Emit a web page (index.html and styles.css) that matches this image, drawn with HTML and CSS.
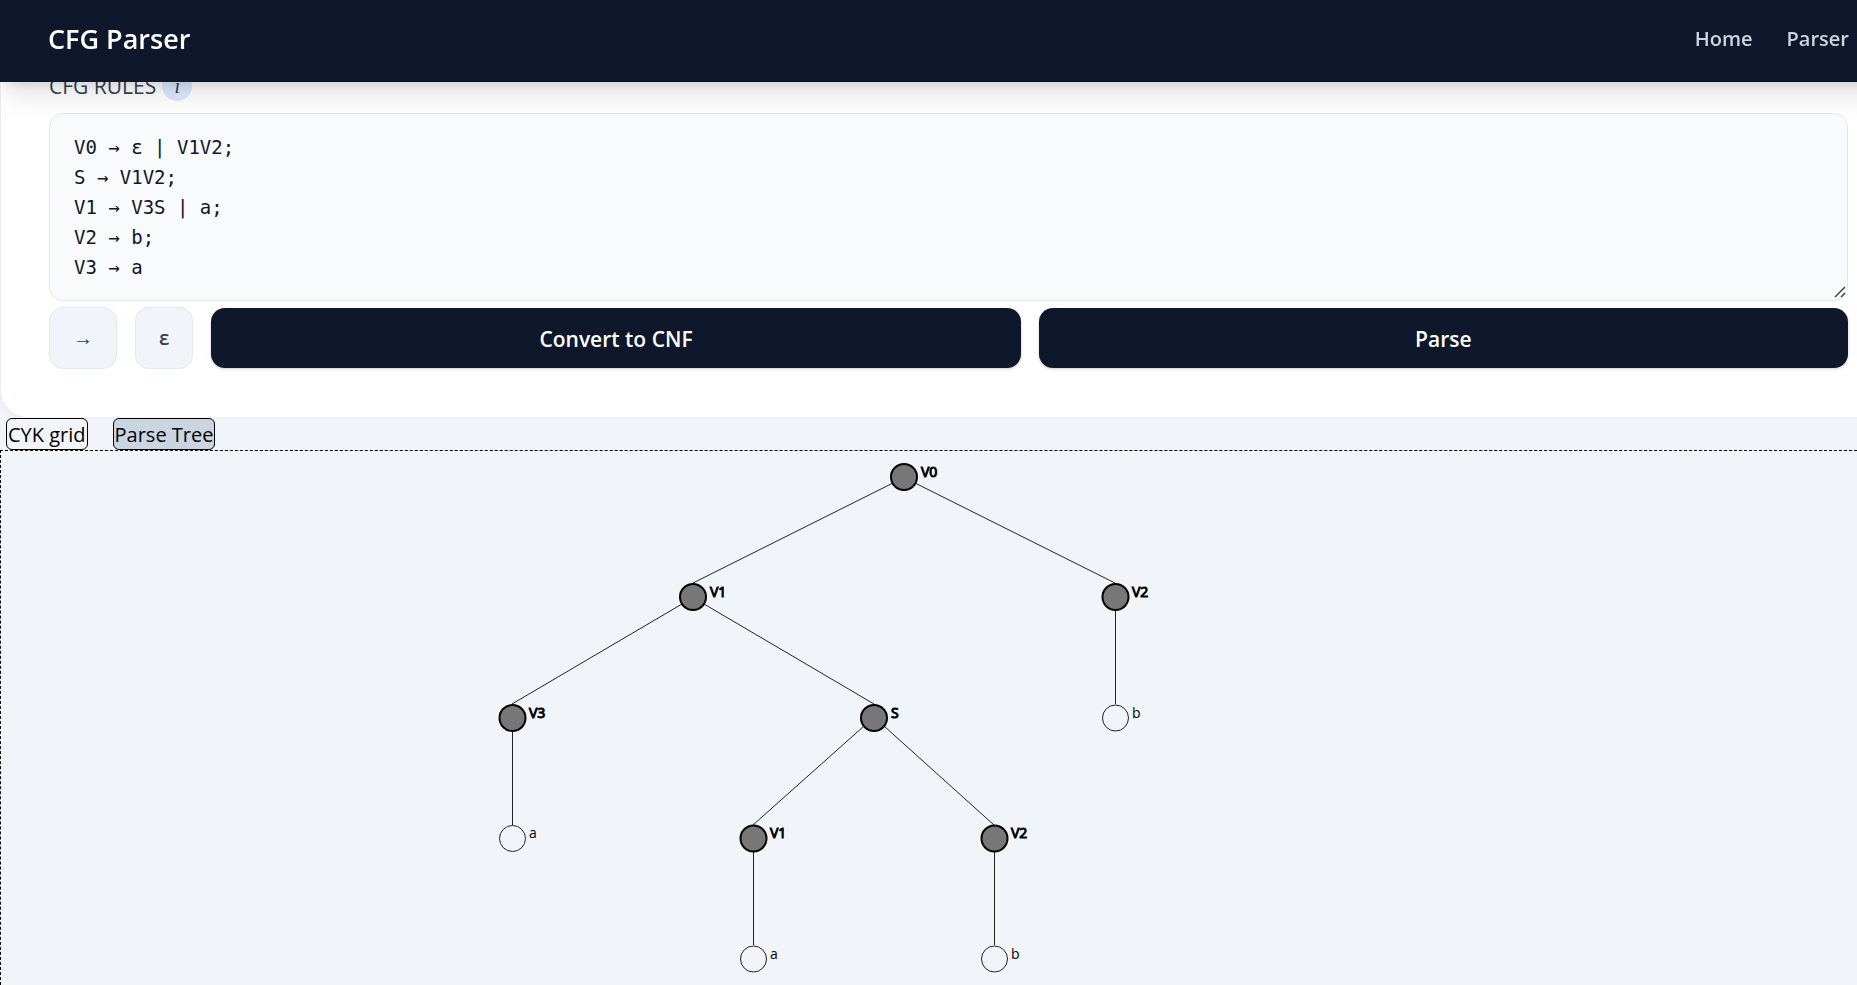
FILE: index.html
```html
<!DOCTYPE html>
<html lang="en">
<head>
<meta charset="utf-8">
<title>CFG Parser</title>
<link rel="stylesheet" href="styles.css">
</head>
<body>
<div class="page">
  <header class="topbar">
    <div class="brand">CFG Parser</div>
    <nav class="nav">
      <a href="#home">Home</a>
      <a href="#parser">Parser</a>
    </nav>
  </header>

  <main class="content">
    <form class="card">
      <div class="label-row">
        <label for="rules">CFG RULES</label>
        <span class="info">i</span>
      </div>
      <div class="rules-box">
        <textarea class="rules" id="rules" rows="5" spellcheck="false">V0 → ε | V1V2;
S → V1V2;
V1 → V3S | a;
V2 → b;
V3 → a</textarea>
        <svg class="grip" width="12" height="12" aria-hidden="true"><path d="M1 11L11 1M7 11L11 7"/></svg>
      </div>
      <div class="actions">
        <button class="symbol" type="button">→</button>
        <button class="symbol" type="button">ε</button>
        <button class="primary" type="button">Convert to CNF</button>
        <button class="primary" type="button">Parse</button>
      </div>
    </form>

    <div class="tabs">
      <button class="tab" type="button">CYK grid</button>
      <button class="tab tab-active" type="button">Parse Tree</button>
    </div>

    <section class="tree" aria-label="Parse tree">
      <svg class="tree-svg" width="1200" height="560">
        <g class="links">
          <path d="M892 32L692 132M914 32L1114 132"/>
          <path d="M681 153L511 253M703 153L873 253M1114.5 160V253"/>
          <path d="M511.5 280V374M863 275L752 374M883 275L993 374"/>
          <path d="M752.5 401V494M993.5 401V494"/>
        </g>
        <g class="node">
          <circle cx="903" cy="26" r="13"/><text x="920" y="26">V0</text>
          <circle cx="692" cy="146" r="13"/><text x="709" y="146">V1</text>
          <circle cx="1114.5" cy="146" r="13"/><text x="1131" y="146">V2</text>
          <circle cx="511.5" cy="267" r="13"/><text x="528" y="267">V3</text>
          <circle cx="873" cy="267" r="13"/><text x="890" y="267">S</text>
          <circle cx="752.5" cy="387.5" r="13"/><text x="769" y="387">V1</text>
          <circle cx="993.5" cy="387.5" r="13"/><text x="1010" y="387">V2</text>
        </g>
        <g class="leaf">
          <circle cx="1114.5" cy="267" r="13"/><text x="1131" y="267">b</text>
          <circle cx="511.5" cy="387.5" r="13"/><text x="528" y="387">a</text>
          <circle cx="752.5" cy="508" r="13"/><text x="769" y="508">a</text>
          <circle cx="993.5" cy="508" r="13"/><text x="1010" y="508">b</text>
        </g>
      </svg>
    </section>
  </main>
</div>
</body>
</html>
```
FILE: styles.css
```css
* {
  box-sizing: border-box;
}

html,
body {
  height: 100%;
  margin: 0;
  overflow: hidden;
}

body {
  background: #f1f5f9;
  color: #000;
  font: 20px/30px "Segoe UI", "Open Sans", "Noto Sans", sans-serif;
}

button,
textarea {
  font: inherit;
  color: inherit;
  margin: 0;
}

/* The layout is wider than the window and runs off its right edge. */
.page {
  height: 100%;
  margin-right: -40px;
}

.topbar {
  position: fixed;
  top: 0;
  left: 0;
  right: -40px;
  z-index: 10;
  display: flex;
  align-items: center;
  justify-content: space-between;
  height: 82px;
  padding: 0 48px 4px;
  background: #0f172a;
  box-shadow: 0 20px 25px -5px rgb(0 0 0 / 0.1), 0 8px 10px -6px rgb(0 0 0 / 0.1);
}

.brand {
  color: #fff;
  font-size: 27px;
  font-weight: 600;
}

.nav {
  display: flex;
  gap: 34px;
}

.nav a {
  color: #cbd5e1;
  font-weight: 600;
  text-decoration: none;
}

.content {
  display: flex;
  flex-direction: column;
  height: 100%;
  padding-top: 71px;
}

.card {
  flex: none;
  margin-left: 1px;
  padding: 0 49px 48px 48px;
  background: #fff;
  border-radius: 0 0 27px 27px;
  box-shadow: -4px 0 12px -4px rgb(0 0 0 / 0.06);
}

.label-row {
  display: flex;
  align-items: center;
  gap: 6px;
  margin-bottom: 12px;
  color: #334155;
  font-size: 21px;
  font-weight: 500;
}

.info {
  width: 30px;
  border-radius: 50%;
  background: #dbeafe;
  font-family: "Liberation Serif", serif;
  font-style: italic;
  font-size: 20px;
  text-align: center;
}

.rules-box {
  position: relative;
}

.rules {
  display: block;
  width: 100%;
  height: 188px;
  padding: 18px 24px;
  border: 1px solid #e2e8f0;
  border-radius: 14px;
  background: #f8fafc;
  color: #0f172a;
  font-family: Consolas, "DejaVu Sans Mono", monospace;
  font-size: 19px;
  resize: vertical;
}

.rules::-webkit-resizer {
  background: transparent;
}

.grip {
  position: absolute;
  right: 2px;
  bottom: 3px;
  fill: none;
  stroke: #444;
  stroke-width: 1.5px;
  pointer-events: none;
}

.actions {
  display: flex;
  align-items: center;
  gap: 18px;
  margin-top: 6px;
}

.symbol {
  padding: 15px 23px;
  border: 1px solid #e2e8f0;
  border-radius: 14px;
  background: #f1f5f9;
  color: #334155;
  font-weight: 600;
}

.primary {
  flex: 1;
  padding: 16px 15px 14px;
  border: 0;
  border-radius: 14px;
  background: #0f172a;
  color: #fff;
  font-size: 21px;
  font-weight: 600;
  box-shadow: 0 1px 3px rgb(0 0 0 / 0.2);
}

.tabs {
  display: flex;
  flex: none;
  gap: 25px;
  padding: 1px 0 0 6px;
}

.tab {
  padding: 2px 1px 0;
  border: 1px solid #000;
  border-radius: 6px;
  background: transparent;
  line-height: 28px;
  font-weight: 500;
}

.tab-active {
  background: #cbd5e1;
}

.tree {
  flex: 1;
  min-height: 0;
  border: 1px dashed #000;
  border-bottom: 0;
  overflow: hidden;
}

.tree-svg {
  display: block;
}

.tree-svg text {
  font-size: 14px;
}

.links {
  fill: none;
  stroke: #222;
}

.node circle {
  fill: #777;
  stroke: #000;
  stroke-width: 2px;
}

.node text {
  stroke: #000;
}

.leaf circle {
  fill: none;
  stroke: #222;
}

.leaf text {
  font-weight: 500;
}
```
